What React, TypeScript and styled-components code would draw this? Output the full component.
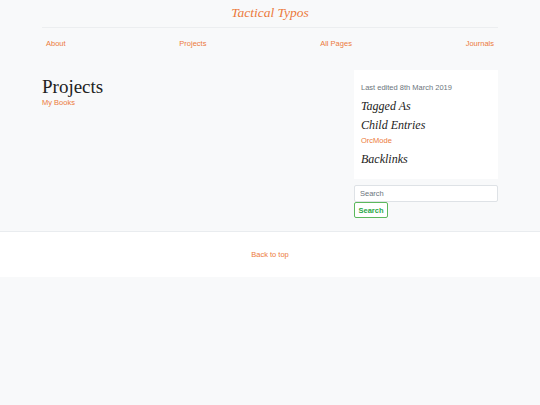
import React from "react";
import styled, { createGlobalStyle } from "styled-components";

const ORANGE = "#ec7a3c";

const Global = createGlobalStyle`
  html, body { margin: 0; padding: 0; background: #f8f9fa; }
  body { font-family: "Liberation Sans", Arial, sans-serif; }
  * { box-sizing: border-box; }
`;

const Page = styled.div`
  width: 540px;
  min-height: 405px;
  background: #f8f9fa;
`;

const Container = styled.div`
  width: 456px;
  margin: 0 auto;
`;

const Brand = styled.div`
  height: 28px;
  padding-top: 5px;
  text-align: center;
  border-bottom: 1px solid #eceef0;
  font-family: "Liberation Serif", Georgia, serif;
  font-style: italic;
  font-size: 13.5px;
  line-height: 16px;
  color: ${ORANGE};
`;

const Nav = styled.nav`
  display: flex;
  justify-content: space-between;
  padding: 0 4px;
  margin-top: 11px;
  height: 10px;
  line-height: 10px;
`;

const Link = styled.a`
  color: ${ORANGE};
  font-size: 7.5px;
  text-decoration: none;
  cursor: pointer;
`;

const Main = styled.div`
  display: flex;
  gap: 12px;
  margin-top: 21px;
  padding-bottom: 13px;
`;

const Content = styled.div`
  flex: 1;
  padding-top: 7px;
`;

const PageTitle = styled.h1`
  margin: 0;
  font-family: "Liberation Serif", Georgia, serif;
  font-weight: 400;
  font-size: 19px;
  line-height: 19px;
  color: #222;
`;

const ContentLink = styled(Link)`
  display: block;
  line-height: 10px;
  margin-top: 2px;
`;

const Sidebar = styled.aside`
  width: 144px;
  display: flex;
  flex-direction: column;
`;

const Card = styled.div`
  background: #ffffff;
  padding: 13px 7px 13px;
  height: 109px;
`;

const Meta = styled.div`
  color: #6c757d;
  font-size: 7.5px;
  line-height: 10px;
  margin-bottom: 6px;
`;

const SideHeading = styled.h4`
  margin: 0;
  font-family: "Liberation Serif", Georgia, serif;
  font-style: italic;
  font-weight: 400;
  font-size: 12px;
  line-height: 14px;
  color: #222;
  margin-bottom: 5px;
`;

const SideLink = styled(Link)`
  display: block;
  line-height: 10px;
  margin-top: -1px;
  margin-bottom: 6px;
`;

const SearchInput = styled.input`
  margin-top: 6px;
  width: 144px;
  height: 17px;
  border: 1px solid #dee2e6;
  border-radius: 2px;
  background: #fff;
  padding: 0 5px;
  font-family: "Liberation Sans", Arial, sans-serif;
  font-size: 7.5px;
  color: #495057;
  outline: none;
  &::placeholder { color: #6c757d; }
`;

const SearchButton = styled.button`
  align-self: flex-start;
  width: 34px;
  height: 16px;
  padding: 0;
  border: 1px solid #5cb85c;
  border-radius: 2px;
  background: #fff;
  color: #28a745;
  font-family: "Liberation Sans", Arial, sans-serif;
  font-weight: 700;
  font-size: 7.5px;
`;

const Footer = styled.footer`
  height: 46px;
  background: #ffffff;
  border-top: 1px solid #e9ecef;
  display: flex;
  align-items: center;
  justify-content: center;
`;

export default function App() {
  return (
    <Page>
      <Global />
      <Container>
        <Brand>Tactical Typos</Brand>
        <Nav>
          <Link>About</Link>
          <Link>Projects</Link>
          <Link>All Pages</Link>
          <Link>Journals</Link>
        </Nav>
        <Main>
          <Content>
            <PageTitle>Projects</PageTitle>
            <ContentLink>My Books</ContentLink>
          </Content>
          <Sidebar>
            <Card>
              <Meta>Last edited 8th March 2019</Meta>
              <SideHeading>Tagged As</SideHeading>
              <SideHeading>Child Entries</SideHeading>
              <SideLink>OrcMode</SideLink>
              <SideHeading>Backlinks</SideHeading>
            </Card>
            <SearchInput placeholder="Search" />
            <SearchButton>Search</SearchButton>
          </Sidebar>
        </Main>
      </Container>
      <Footer>
        <Link>Back to top</Link>
      </Footer>
    </Page>
  );
}
